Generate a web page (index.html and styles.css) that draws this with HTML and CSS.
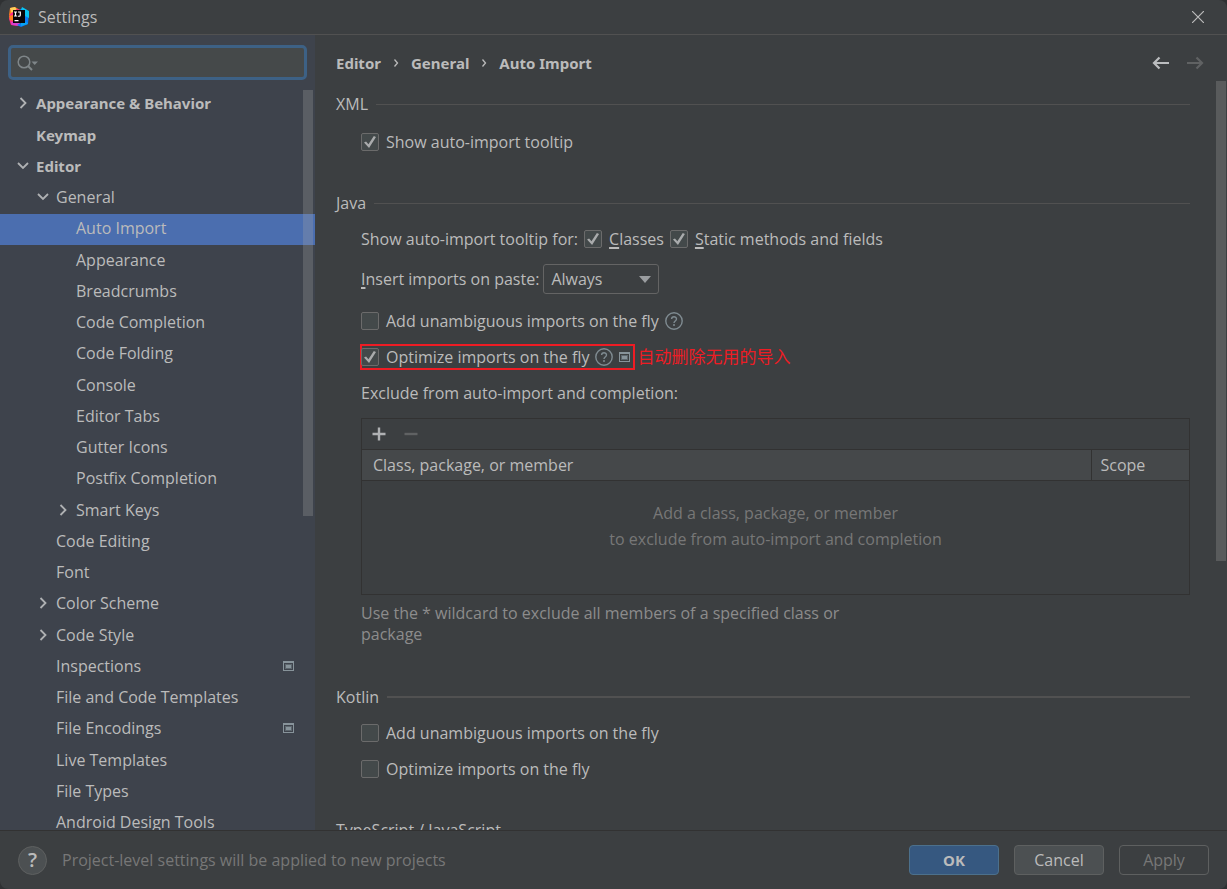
FILE: index.html
```html
<!DOCTYPE html>
<html lang="en">
<head>
<meta charset="utf-8">
<title>Settings</title>
<link rel="stylesheet" href="styles.css">
</head>
<body>
<svg class="defs" aria-hidden="true">
  <symbol id="right" viewBox="0 0 16 16"><path d="M5.5 3 L10.5 8 L5.5 13" fill="none" stroke="currentColor" stroke-width="1.8"/></symbol>
  <symbol id="down" viewBox="0 0 16 16"><path d="M3 5 L8 10 L13 5" fill="none" stroke="currentColor" stroke-width="1.8"/></symbol>
  <symbol id="project" viewBox="0 0 11 10"><path fill="#87939a" fill-rule="evenodd" d="M0 0H11V10H0Z M1 2V9H10V2Z"/><path fill="#5d676e" d="M2 3H9V8H2Z"/><path fill="#87939a" d="M3 4H8V7H3Z"/></symbol>
  <symbol id="help" viewBox="0 0 18 18"><circle cx="9" cy="9" r="8.2" fill="none" stroke="#7f8b91" stroke-width="1.4"/><path d="M6.6 7.1C6.6 4 11.5 4.1 11.5 7C11.5 9 9 8.9 9 10.9" fill="none" stroke="#7f8b91" stroke-width="1.4"/><circle cx="9" cy="13" r="1" fill="#7f8b91"/></symbol>
</svg>
<div class="window">
  <header class="titlebar">
    <svg class="logo" viewBox="0 0 20 20" aria-hidden="true">
      <path d="M1 1L6 0L11 3L8 10L2 12L0 8Z" fill="#fc801d"/>
      <path d="M1 1L6 0L8 3L3 7Z" fill="#fdd05b"/>
      <path d="M1 7L8 2L12 3L8 8L9 19L2 18L0 12Z" fill="#fe2887"/>
      <path d="M0 9L4 8L4 14L1 13Z" fill="#fc801d"/>
      <path d="M2 15L10 15L12 19L3 18Z" fill="#d83fd0"/>
      <path d="M10 3L14 1L20 5L19 17L12 20L8 18L16 14Z" fill="#087cfa"/>
      <path d="M12 3L13 0L20 4L20 11L16 9L15 4Z" fill="#07c3f2"/>
      <path d="M12 16L17 15L19 17L12 19Z" fill="#07a3f2"/>
      <path d="M4 3H16V16H4Z" fill="#080508"/>
      <path d="M5 5H8M6.5 5V9M5 9H8M9 5H11.3V8C11.3 9.4 10 9.4 8.8 9" fill="none" stroke="#fff" stroke-width="1.2"/>
      <path d="M5.5 13H9.5V14.3H5.5Z" fill="#fff"/>
    </svg>
    <h1 class="title">Settings</h1>
    <button class="close" aria-label="Close"><svg viewBox="0 0 12 12"><path d="M0 0L12 12M12 0L0 12" stroke="#bbb" stroke-width="1.2"/></svg></button>
  </header>

  <div class="body">
    <aside class="sidebar">
      <div class="search">
        <input class="search-input" type="text" aria-label="Search settings">
        <svg class="search-icon" viewBox="0 0 22 16" aria-hidden="true"><circle cx="7" cy="7" r="5.8" fill="none" stroke="#7f8689" stroke-width="1.5"/><path d="M11 11L15 15" stroke="#7f8689" stroke-width="2"/><path d="M14.5 6.5H21L17.7 10Z" fill="#7f8689"/></svg>
      </div>
      <div class="tree-pane">
        <ul class="tree">
          <li class="node l1 bold"><svg class="chev"><use href="#right"/></svg>Appearance &amp; Behavior</li>
          <li class="node l1 bold"><span class="chev"></span>Keymap</li>
          <li class="node l1 bold"><svg class="chev"><use href="#down"/></svg>Editor</li>
          <li class="node l2"><svg class="chev"><use href="#down"/></svg>General</li>
          <li class="node l3 selected"><span class="chev"></span>Auto Import</li>
          <li class="node l3"><span class="chev"></span>Appearance</li>
          <li class="node l3"><span class="chev"></span>Breadcrumbs</li>
          <li class="node l3"><span class="chev"></span>Code Completion</li>
          <li class="node l3"><span class="chev"></span>Code Folding</li>
          <li class="node l3"><span class="chev"></span>Console</li>
          <li class="node l3"><span class="chev"></span>Editor Tabs</li>
          <li class="node l3"><span class="chev"></span>Gutter Icons</li>
          <li class="node l3"><span class="chev"></span>Postfix Completion</li>
          <li class="node l3"><svg class="chev"><use href="#right"/></svg>Smart Keys</li>
          <li class="node l2"><span class="chev"></span>Code Editing</li>
          <li class="node l2"><span class="chev"></span>Font</li>
          <li class="node l2"><svg class="chev"><use href="#right"/></svg>Color Scheme</li>
          <li class="node l2"><svg class="chev"><use href="#right"/></svg>Code Style</li>
          <li class="node l2"><span class="chev"></span>Inspections<svg class="project tail"><use href="#project"/></svg></li>
          <li class="node l2"><span class="chev"></span>File and Code Templates</li>
          <li class="node l2"><span class="chev"></span>File Encodings<svg class="project tail"><use href="#project"/></svg></li>
          <li class="node l2"><span class="chev"></span>Live Templates</li>
          <li class="node l2"><span class="chev"></span>File Types</li>
          <li class="node l2"><span class="chev"></span>Android Design Tools</li>
        </ul>
        <div class="thumb tree-thumb"></div>
      </div>
    </aside>

    <main class="content">
      <div class="content-head">
        <nav class="crumbs" aria-label="Breadcrumb">
          <span>Editor</span><svg class="sep" viewBox="0 0 6 10"><path d="M1.5 1.5L4.5 5L1.5 8.5" fill="none" stroke="#bbb" stroke-width="1.3"/></svg><span>General</span><svg class="sep" viewBox="0 0 6 10"><path d="M1.5 1.5L4.5 5L1.5 8.5" fill="none" stroke="#bbb" stroke-width="1.3"/></svg><span>Auto Import</span>
        </nav>
        <button class="nav" aria-label="Back"><svg viewBox="0 0 18 14"><path d="M17 7H2M7.5 1.5L2 7L7.5 12.5" fill="none" stroke="#bbbdbf" stroke-width="2.2"/></svg></button>
        <button class="nav" aria-label="Forward" disabled><svg viewBox="0 0 18 14"><path d="M1 7H16M10.5 1.5L16 7L10.5 12.5" fill="none" stroke="#606263" stroke-width="2.2"/></svg></button>
      </div>
      <div class="scroll">
        <section class="group">
          <h2 class="group-title">XML</h2>
          <div class="row first"><label class="check"><input type="checkbox" checked>Show auto-import tooltip</label></div>
        </section>

        <section class="group">
          <h2 class="group-title">Java</h2>
          <div class="row"><span>Show auto-import tooltip for:</span>
            <label class="check"><input type="checkbox" checked><span><u>C</u>lasses</span></label>
            <label class="check"><input type="checkbox" checked><span><u>S</u>tatic methods and fields</span></label>
          </div>
          <div class="row paste"><label for="paste"><u>I</u>nsert imports on paste:</label>
            <span class="combo"><select id="paste"><option>Always</option><option>Ask</option><option>Never</option></select><svg class="arrow" viewBox="0 0 12 7" aria-hidden="true"><path d="M0 0H12L6 7Z" fill="#9a9da0"/></svg></span>
          </div>
          <div class="row"><label class="check"><input type="checkbox">Add unambiguous imports on the fly</label><svg class="help"><use href="#help"/></svg></div>
          <div class="row marked">
            <div class="mark"><label class="check"><input type="checkbox" checked>Optimize imports on the fly</label><svg class="help"><use href="#help"/></svg><svg class="project"><use href="#project"/></svg></div>
            <span class="note" lang="zh-CN">自动删除无用的导入</span>
          </div>
          <div class="row exclude">Exclude from auto-import and completion:</div>
          <div class="list">
            <div class="toolbar">
              <button class="tool" aria-label="Add"><svg viewBox="0 0 14 14"><path d="M7 0.5V13.5M0.5 7H13.5" stroke="#afb1b3" stroke-width="2.4"/></svg></button>
              <button class="tool" aria-label="Remove" disabled><svg viewBox="0 0 14 14"><path d="M0.5 7H13.5" stroke="#606263" stroke-width="2.4"/></svg></button>
            </div>
            <table class="table">
              <thead><tr><th>Class, package, or member</th><th class="scope">Scope</th></tr></thead>
              <tbody><tr><td colspan="2">Add a class, package, or member<br>to exclude from auto-import and completion</td></tr></tbody>
            </table>
          </div>
          <p class="hint">Use the * wildcard to exclude all members of a specified class or package</p>
        </section>

        <section class="group">
          <h2 class="group-title thick">Kotlin</h2>
          <div class="row"><label class="check"><input type="checkbox">Add unambiguous imports on the fly</label></div>
          <div class="row"><label class="check"><input type="checkbox">Optimize imports on the fly</label></div>
        </section>

        <section class="group">
          <h2 class="group-title plain">TypeScript / JavaScript</h2>
        </section>
      </div>
      <div class="thumb main-thumb"></div>
    </main>
  </div>

  <footer class="footer">
    <button class="help-button" aria-label="Help">?</button>
    <span class="status">Project-level settings will be applied to new projects</span>
    <button class="button primary">OK</button>
    <button class="button">Cancel</button>
    <button class="button" disabled>Apply</button>
  </footer>
</div>
</body>
</html>
```
FILE: styles.css
```css
* { box-sizing: border-box; }
body {
  margin: 0;
  background: #2f3133;
  color: #bbbbbb;
  font: 16px/20px "Open Sans", "Noto Sans CJK SC", sans-serif;
}
button, input, select { font: inherit; color: inherit; }
button { background: none; border: 0; padding: 0; }
svg { display: block; flex: none; }
u { text-decoration-thickness: 2px; text-underline-offset: 2px; text-decoration-skip-ink: none; }
.defs { position: absolute; width: 0; height: 0; }

.window {
  height: 100vh;
  display: flex;
  flex-direction: column;
  background: #3c3f41;
  border-radius: 8px;
  overflow: hidden;
}

.titlebar {
  flex: none;
  display: flex;
  align-items: center;
  gap: 9px;
  height: 35px;
  padding: 0 23px 0 9px;
  border-bottom: 1px solid #515151;
}
.logo { width: 20px; height: 20px; }
.title { margin: 0; font-size: 16px; font-weight: 400; }
.close { margin-left: auto; }
.close svg { width: 12px; height: 12px; }

.body { flex: 1; display: flex; min-height: 0; }

.sidebar {
  flex: none;
  width: 315px;
  display: flex;
  flex-direction: column;
  background: #3e434c;
}
.search { position: relative; padding: 10px 8px 9px; }
.search-input {
  display: block;
  width: 100%;
  height: 35px;
  padding: 0 12px 0 32px;
  background: #45494a;
  border: 3px solid #3d6185;
  border-radius: 5px;
  outline: 0;
}
.search-icon { position: absolute; left: 17px; top: 20px; width: 22px; height: 16px; }
.tree-pane { position: relative; flex: 1; min-height: 0; overflow: hidden; }
.tree { margin: 0; padding: 0; list-style: none; }
.node { display: flex; align-items: center; height: 31px; gap: 5px; padding-right: 21px; padding-bottom: 3px; }
.node:nth-child(4n+2) { height: 32px; }
.l1 { padding-left: 15px; }
.l2 { padding-left: 35px; }
.l3 { padding-left: 55px; }
.bold, .crumbs, .primary { font-family: "Noto Sans", sans-serif; font-size: 15px; font-weight: 700; }
.selected { background: #4b6eaf; }
.chev { flex: none; width: 16px; height: 16px; color: #afb1b3; }
.project { width: 11px; height: 10px; }
.tail { margin-left: auto; }
.thumb { position: absolute; width: 10px; background: rgba(166, 166, 166, 0.28); }
.tree-thumb { top: 1px; right: 2px; height: 426px; }

.content { position: relative; flex: 1; min-width: 0; display: flex; flex-direction: column; }
.content-head { flex: none; display: flex; align-items: center; gap: 16px; height: 56px; padding: 0 23px 0 21px; }
.crumbs { flex: 1; display: flex; align-items: center; gap: 12px; }
.sep { width: 6px; height: 10px; }
.nav svg { width: 18px; height: 14px; }
.main-thumb { top: 46px; right: 1px; height: 480px; }

.scroll { flex: 1; min-height: 0; overflow: hidden; padding: 0 37px 0 21px; }
.group { display: flex; flex-direction: column; gap: 10px; margin-bottom: 35px; }
.group-title { display: flex; align-items: center; gap: 8px; margin: 0; height: 26px; font-size: 16px; font-weight: 400; }
.group-title::after { content: ""; flex: 1; height: 1px; background: #515151; }
.thick::after { height: 2px; }
.plain::after { visibility: hidden; }
.row { display: flex; align-items: center; gap: 6px; min-height: 26px; padding-left: 25px; }
.first { margin-top: 2px; }
.check { display: flex; align-items: center; gap: 7px; }
.check input {
  appearance: none;
  flex: none;
  display: grid;
  place-items: center;
  width: 18px;
  height: 18px;
  margin: 0;
  background: #43494a;
  border: 1px solid #6b6b6b;
  border-radius: 2px;
}
.check input:checked::before {
  content: "";
  width: 12px;
  height: 12px;
  background: #a9abac;
  clip-path: polygon(0 55%, 17% 45%, 37% 68%, 82% 0, 100% 8%, 42% 100%);
}
.help { width: 18px; height: 18px; }

.paste { gap: 4px; margin: 2px 0 4px; }
.combo { position: relative; }
.combo select {
  display: block;
  appearance: none;
  width: 116px;
  height: 30px;
  padding: 0 24px 0 7px;
  background: #3c3f41;
  border: 1px solid #646464;
  border-radius: 3px;
}
.arrow { position: absolute; right: 8px; top: 12px; width: 12px; height: 7px; pointer-events: none; }

.marked { gap: 2px; padding-left: 24px; }
.mark { display: flex; align-items: center; gap: 6px; height: 26px; padding-right: 3px; border: 2px solid #ee1c24; }
.mark .check input { margin-left: -1px; }
.note { color: #ee1c24; font-size: 17px; }

.exclude { margin-bottom: 2px; }
.list { margin-left: 25px; border: 1px solid #323232; }
.toolbar { display: flex; align-items: center; gap: 18px; height: 30px; padding: 0 10px; }
.tool svg { width: 14px; height: 14px; }
.table { width: 100%; border-collapse: collapse; }
.table th {
  height: 31px;
  padding: 0 11px;
  background: #45484a;
  border-top: 1px solid #323232;
  border-bottom: 1px solid #323232;
  text-align: left;
  font-weight: 400;
}
.table .scope { width: 98px; padding: 0 9px; border-left: 1px solid #323232; }
.table td { height: 113px; padding: 0 0 22px; text-align: center; line-height: 26px; color: #777777; }
.hint { margin: -2px 0 4px 25px; max-width: 490px; line-height: 21px; color: #8c8c8c; }

.footer {
  flex: none;
  display: flex;
  align-items: center;
  gap: 15px;
  height: 59px;
  padding: 0 18px;
  border-top: 1px solid #323232;
}
.help-button {
  width: 29px;
  height: 29px;
  background: #4c5052;
  border: 1px solid #5e6060;
  border-radius: 50%;
  font-size: 20px;
  font-weight: 600;
}
.status { flex: 1; color: #777777; }
.button {
  width: 90px;
  height: 30px;
  background: #4c5052;
  border: 1px solid #5e6060;
  border-radius: 4px;
}
.button:disabled { background: none; color: #777777; }
.button.primary { background: #365880; border-color: #4c708c; }
```
